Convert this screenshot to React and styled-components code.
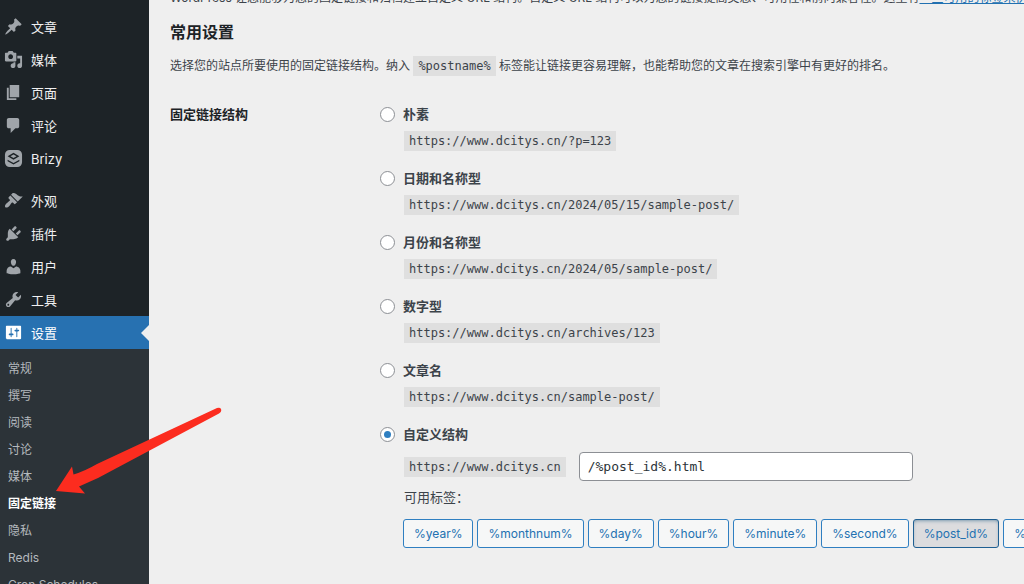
import React, { useState } from 'react'
import styled, { createGlobalStyle } from 'styled-components'

//menu icons, 20x20 grid
const icons = {
    post: 'M10.44 3.02l1.82-1.82 6.36 6.35-1.83 1.82c-1.05-.68-2.48-.57-3.41.36l-.75.75c-.92.93-1.04 2.35-.35 3.41l-1.83 1.82-2.41-2.41-2.8 2.79c-.42.42-3.38 2.71-3.8 2.29s1.86-3.39 2.28-3.81l2.79-2.79L4.1 9.36l1.83-1.82c1.05.69 2.48.57 3.4-.36l.75-.75c.93-.92 1.05-2.35.36-3.41z',
    media: 'M13 11V4c0-.55-.45-1-1-1h-1.67L9 1H5L3.67 3H2c-.55 0-1 .45-1 1v7c0 .55.45 1 1 1h10c.55 0 1-.45 1-1zM7 4.5c1.38 0 2.5 1.12 2.5 2.5S8.38 9.5 7 9.5 4.5 8.38 4.5 7 5.62 4.5 7 4.5zM14 6h5v10.5c0 1.38-1.12 2.5-2.5 2.5S14 17.88 14 16.5s1.12-2.5 2.5-2.5c.17 0 .34.02.5.05V9h-3V6zm-4 8.05V13h2v3.5c0 1.38-1.12 2.5-2.5 2.5S7 17.88 7 16.5 8.12 14 9.5 14c.17 0 .34.02.5.05z',
    page: 'M6 15V2h10v13H6zm-1 1h8v2H3V5h2v11z',
    comments: 'M5 2h9c1.1 0 2 .9 2 2v7c0 1.1-.9 2-2 2h-2l-5 5v-5H5c-1.1 0-2-.9-2-2V4c0-1.1.9-2 2-2z',
    brizy: 'M6 1h8a5 5 0 0 1 5 5v8a5 5 0 0 1-5 5H6a5 5 0 0 1-5-5V6a5 5 0 0 1 5-5zM10 4L3.800 7.700 10 11.400l6.200-3.700zM10 5.800l3.200 1.900L10 9.600 6.800 7.700zM3.800 11.300v1.500L10 16.400l6.200-3.600v-1.500L10 14.800z',
    appearance: 'M14.48 11.06L7.41 3.99l1.5-1.5c.5-.56 2.3-.47 3.51.32 1.21.8 1.43 1.28 2.91 2.1 1.18.64 2.45 1.26 4.45.85zm-.71.71L6.7 4.7 4.93 6.47c-.39.39-.39 1.02 0 1.41l1.06 1.06c.39.39.39 1.03 0 1.42-.6.6-1.43 1.11-2.21 1.69-.35.26-.7.53-1.01.84C1.43 14.23.4 16.08 1.4 17.07c.99 1 2.84-.03 4.18-1.36.31-.31.58-.66.85-1.02.57-.78 1.08-1.61 1.69-2.21.39-.39 1.02-.39 1.41 0l1.06 1.06c.39.39 1.02.39 1.41 0z',
    plugins: 'M13.11 4.36L9.87 7.6 8 5.73l3.24-3.24c.35-.34 1.05-.2 1.56.32.52.51.66 1.21.31 1.55zm-8 1.77l.91-1.12 9.01 9.01-1.19.84c-.71.71-2.63 1.16-3.82 1.16H6.14L4.9 17.26c-.59.59-1.54.59-2.12 0-.59-.58-.59-1.53 0-2.12l1.24-1.24v-3.88c0-1.13.4-3.19 1.09-3.89zm7.26 3.97l3.24-3.24c.34-.35 1.04-.21 1.55.31.52.51.66 1.21.31 1.55l-3.24 3.25z',
    users: 'M10 9.25c-2.27 0-2.73-3.44-2.73-3.44C7 4.02 7.82 2 9.97 2c2.16 0 2.98 2.02 2.71 3.81 0 0-.41 3.44-2.68 3.44zm0 2.57L12.72 10c2.39 0 4.52 2.33 4.52 4.53v2.49s-3.65 1.13-7.24 1.13c-3.65 0-7.24-1.13-7.24-1.13v-2.49c0-2.25 1.94-4.48 4.47-4.48z',
    tools: 'M16.68 9.77c-1.34 1.34-3.3 1.67-4.95.99l-5.41 6.52c-.99.99-2.59.99-3.58 0s-.99-2.59 0-3.57l6.52-5.42c-.68-1.65-.35-3.61.99-4.95 1.28-1.28 3.12-1.62 4.72-1.06l-2.89 2.89 2.82 2.82 2.86-2.87c.53 1.58.18 3.39-1.08 4.65zM3.81 16.21c.4.39 1.04.39 1.43 0 .4-.4.4-1.04 0-1.43-.39-.4-1.03-.4-1.43 0-.39.39-.39 1.03 0 1.43z',
    settings: 'M18 16V4c0-.55-.45-1-1-1H3c-.55 0-1 .45-1 1v12c0 .55.45 1 1 1h14c.55 0 1-.45 1-1zM8 11h1c.55 0 1 .45 1 1s-.45 1-1 1H8v1.5c0 .28-.22.5-.5.5s-.5-.22-.5-.5V13H6c-.55 0-1-.45-1-1s.45-1 1-1h1V5.5c0-.28.22-.5.5-.5s.5.22.5.5V11zm5-2h-1c-.55 0-1-.45-1-1s.45-1 1-1h1V5.5c0-.28.22-.5.5-.5s.5.22.5.5V7h1c.55 0 1 .45 1 1s-.45 1-1 1h-1v5.5c0 .28-.22.5-.5.5s-.5-.22-.5-.5V9z',
};

const contentMenu = [
    ['post', '文章'],
    ['media', '媒体'],
    ['page', '页面'],
    ['comments', '评论'],
    ['brizy', 'Brizy'],
];

const adminMenu = [
    ['appearance', '外观'],
    ['plugins', '插件'],
    ['users', '用户'],
    ['tools', '工具'],
    ['settings', '设置'],
];

const settingsMenu = ['常规', '撰写', '阅读', '讨论', '媒体', '固定链接', '隐私', 'Redis', 'Cron Schedules'];

const site = 'https://www.dcitys.cn';

const structures = [
    ['plain', '朴素', '/?p=123'],
    ['day', '日期和名称型', '/2024/05/15/sample-post/'],
    ['month', '月份和名称型', '/2024/05/sample-post/'],
    ['numeric', '数字型', '/archives/123'],
    ['name', '文章名', '/sample-post/'],
];

const tags = ['%year%', '%monthnum%', '%day%', '%hour%', '%minute%', '%second%', '%post_id%', '%postname%'];

const Menu = ({items, current}) => (
    <MenuList>
        {items.map(([icon, label]) => (
            <li key={icon}>
                <MenuLink href="#" $current={icon === current}>
                    <svg viewBox="0 0 20 20" fillRule="evenodd" aria-hidden="true">
                        <path d={icons[icon]}/>
                    </svg>
                    {label}
                </MenuLink>
            </li>
        ))}
    </MenuList>
);

const App = () => {
    const [selected, setSelected] = useState('custom');
    const [custom, setCustom] = useState('/%post_id%.html');

    const toggleTag = (tag) => {
        setSelected('custom');
        setCustom(custom.includes(tag) ? custom.replace(tag, '') : custom + '/' + tag);
    };

    return (
        <Page>
            <GlobalStyle/>
            <Sidebar>
                <Menu items={contentMenu}/>
                <Menu items={adminMenu} current="settings"/>
                <SubMenu>
                    {settingsMenu.map((label) => (
                        <li key={label}>
                            <SubLink href="#" $current={label === '固定链接'}>{label}</SubLink>
                        </li>
                    ))}
                </SubMenu>
            </Sidebar>
            <Content>
                <Intro>
                    WordPress 让您能够为您的固定链接和归档建立自定义 URL 结构。自定义 URL 结构可以为您的链接提高美感、可用性和前向兼容性。这里有<a href="#">一些可用的标签来供您使用</a>
                </Intro>
                <Title>常用设置</Title>
                <Text>
                    选择您的站点所要使用的固定链接结构。纳入 <Code>%postname%</Code> 标签能让链接更容易理解，也能帮助您的文章在搜索引擎中有更好的排名。
                </Text>
                <Form>
                    <FormTitle id="structure">固定链接结构</FormTitle>
                    <Options role="radiogroup" aria-labelledby="structure">
                        {structures.map(([id, label, path]) => (
                            <Option key={id}>
                                <RadioLabel>
                                    <Radio name="selection" checked={selected === id} onChange={() => setSelected(id)}/>
                                    {label}
                                </RadioLabel>
                                <Example><Code>{site + path}</Code></Example>
                            </Option>
                        ))}
                        {/*custom structure*/}
                        <div>
                            <RadioLabel>
                                <Radio name="selection" checked={selected === 'custom'} onChange={() => setSelected('custom')}/>
                                自定义结构
                            </RadioLabel>
                            <CustomRow>
                                <Code as="label" htmlFor="custom">{site}</Code>
                                <CustomInput id="custom" value={custom} onChange={(e) => setCustom(e.target.value)}/>
                            </CustomRow>
                            <TagsTitle>可用标签：</TagsTitle>
                            <Tags>
                                {tags.map((tag) => (
                                    <Tag key={tag} type="button" $active={custom.includes(tag)} onClick={() => toggleTag(tag)}>
                                        {tag}
                                    </Tag>
                                ))}
                            </Tags>
                        </div>
                    </Options>
                </Form>
            </Content>
            <Arrow viewBox="0 0 168 88" aria-hidden="true">
                <path d="M1 85L17 60.500L18.500 68.500Q30 65 42 58L162 2Q165 1 166 3Q167 5.500 164 7.500L43 72Q34 76 24 80.500L30 87.500Z"/>
            </Arrow>
        </Page>
    );
};

const GlobalStyle = createGlobalStyle`
*{
    box-sizing: border-box;
    margin: 0;
    padding: 0;
}
body{
    background: #efefef;
    color: #3c434a;
    font-family: Inter, "Noto Sans CJK SC", sans-serif;
    font-size: 12px;
    line-height: 20px;
}
button, input{
    font: inherit;
}
`;

const Page = styled.div`
display: flex;
position: relative;
height: 100vh;
overflow: hidden;
`;

const Sidebar = styled.nav`
flex: 0 0 149px;
display: flex;
flex-direction: column;
padding-top: 10px;
background: #1d2327;
`;

const MenuList = styled.ul`
list-style: none;

& + &{
    margin-top: 9px;
}
`;

const MenuLink = styled.a`
display: flex;
align-items: center;
gap: 8px;
height: 33px;
padding-left: 4px;
position: relative;
color: ${({$current}) => $current ? '#fff' : '#f0f0f1'};
background: ${({$current}) => $current ? '#2771b1' : 'none'};
font-size: 13px;
text-decoration: none;

svg{
    width: 19px;
    height: 19px;
    fill: ${({$current}) => $current ? '#fff' : '#a0a5aa'};
}

&::after{
    content: "";
    display: ${({$current}) => $current ? 'block' : 'none'};
    position: absolute;
    right: 0;
    border: 8px solid transparent;
    border-right-color: #efefef;
    border-left: 0;
}
`;

const SubMenu = styled.ul`
flex: 1;
list-style: none;
padding: 6px 0;
background: #2c3338;
`;

const SubLink = styled.a`
display: block;
padding-left: 8px;
color: ${({$current}) => $current ? '#fff' : '#b4b9be'};
font-weight: ${({$current}) => $current ? 700 : 400};
line-height: 27px;
text-decoration: none;
white-space: nowrap;
`;

const Content = styled.main`
flex: 1;
min-width: 0;
padding-left: 21px;
margin-top: -12px;
`;

const Intro = styled.p`
white-space: nowrap;

a{
    color: #2271b1;
}
`;

const Title = styled.h2`
margin-top: 12px;
color: #1d2327;
font-size: 16px;
line-height: 24px;
`;

const Text = styled.p`
margin-top: 12px;
line-height: 20px;
`;

const Code = styled.code`
display: inline-block;
padding: 0 5px;
background: #dfdfdf;
font-family: "DejaVu Sans Mono", monospace;
font-size: 12px;
line-height: 20px;
`;

const Form = styled.form`
display: grid;
grid-template-columns: 210px minmax(0, 1fr);
margin-top: 28px;
`;

const FormTitle = styled.h3`
color: #1d2327;
font-size: 13px;
line-height: 20px;
`;

const Options = styled.div`
display: flex;
flex-direction: column;
`;

const Option = styled.div`
height: 64px;
`;

const RadioLabel = styled.label`
display: flex;
align-items: center;
gap: 8px;
font-size: 13px;
font-weight: 600;
line-height: 20px;
`;

const Radio = styled.input.attrs({type: 'radio'})`
appearance: none;
display: grid;
place-items: center;
width: 15px;
height: 15px;
border: 1px solid #8c8f94;
border-radius: 50%;
background: #fff;

&:checked::before{
    content: "";
    width: 7px;
    height: 7px;
    border-radius: 50%;
    background: #2f7fc1;
}
`;

const Example = styled.p`
display: flex;
padding: 7px 0 0 24px;
`;

const CustomRow = styled.div`
display: flex;
align-items: center;
gap: 13px;
padding: 8px 0 0 24px;
`;

const CustomInput = styled.input`
width: 334px;
height: 29px;
padding: 0 8px;
border: 1px solid #8c8f94;
border-radius: 4px;
background: #fff;
color: #2c3338;
font-family: "DejaVu Sans Mono", monospace;
font-size: 13px;
`;

const TagsTitle = styled.p`
padding: 6px 0 0 24px;
font-size: 13px;
line-height: 20px;
`;

const Tags = styled.div`
display: flex;
gap: 4px;
padding: 12px 0 0 23px;
`;

const Tag = styled.button`
flex: none;
height: 29px;
padding: 0 10px;
border: 1px solid ${({$active}) => $active ? '#1f5f92' : '#2f7fc1'};
border-radius: 3px;
background: ${({$active}) => $active ? '#dcdcde' : '#f6f7f7'};
box-shadow: ${({$active}) => $active ? 'inset 0 2px 5px -3px #0a4b78' : 'none'};
color: #2271b1;
font-size: 12px;
cursor: pointer;
`;

const Arrow = styled.svg`
position: absolute;
left: 55px;
top: 406px;
width: 168px;
height: 88px;
fill: #fc2c1f;
pointer-events: none;
`;

export default App
